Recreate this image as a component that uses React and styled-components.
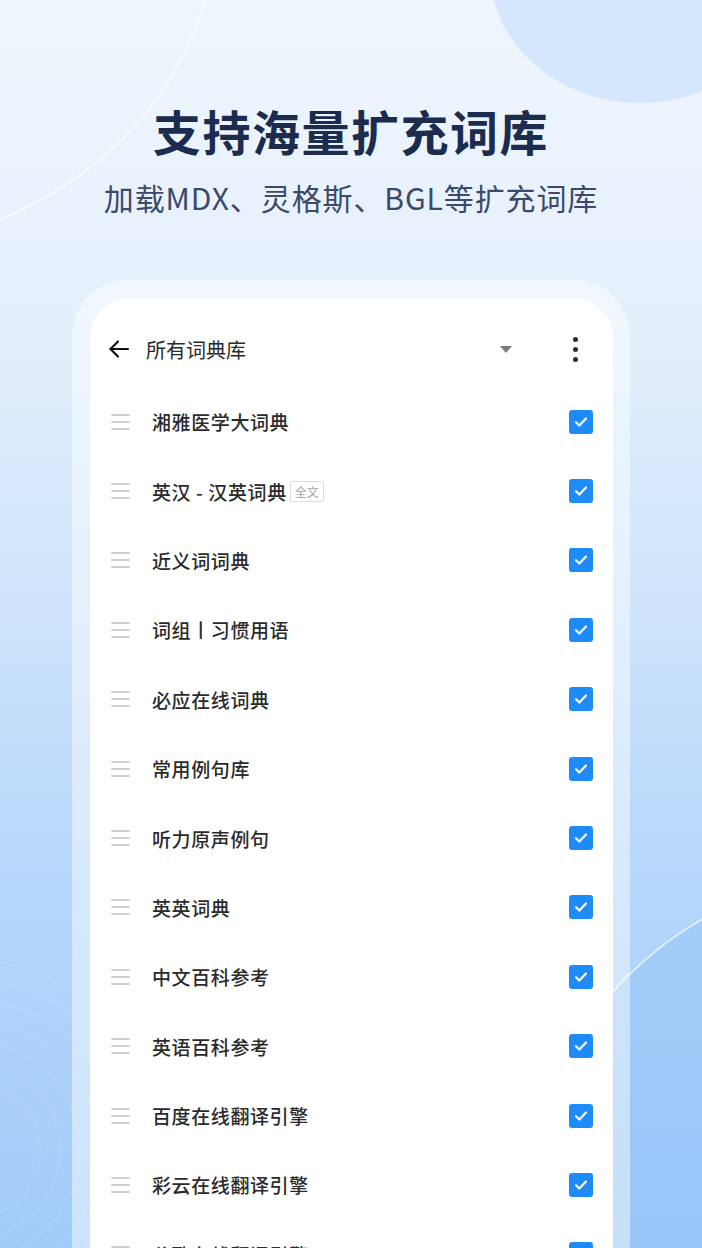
import React from "react";
import styled, { createGlobalStyle } from "styled-components";

const GlobalStyle = createGlobalStyle`
  html, body {
    margin: 0;
    padding: 0;
  }
  body {
    font-family: "Noto Sans CJK SC", "Noto Sans", sans-serif;
  }
`;

const dictionaries = [
  { name: "湘雅医学大词典" },
  { name: "英汉 - 汉英词典", tag: "全文" },
  { name: "近义词词典" },
  { name: "词组丨习惯用语" },
  { name: "必应在线词典" },
  { name: "常用例句库" },
  { name: "听力原声例句" },
  { name: "英英词典" },
  { name: "中文百科参考" },
  { name: "英语百科参考" },
  { name: "百度在线翻译引擎" },
  { name: "彩云在线翻译引擎" },
  { name: "谷歌在线翻译引擎" },
];

export default function App() {
  return (
    <Page>
      <GlobalStyle />
      <Backdrop viewBox="0 0 702 1248" preserveAspectRatio="none">
        <ellipse cx="640" cy="-30" rx="150" ry="133" fill="#d4e7fc" />
        <path d="M205 0 Q160 150 0 220" fill="none" stroke="#ffffff" strokeOpacity="0.85" strokeWidth="1.5" />
        <circle cx="880" cy="1230" r="358" fill="#7fb8f6" fillOpacity="0.28" stroke="#ffffff" strokeOpacity="0.75" strokeWidth="1.5" />
        {[70, 90, 110, 130, 150, 170, 190].map((r) => (
          <circle key={r} cx="-30" cy="1150" r={r} fill="none" stroke="#ffffff" strokeOpacity="0.12" strokeWidth="1.2" />
        ))}
      </Backdrop>

      <Content>
        <Hero>
          <Title>支持海量扩充词库</Title>
          <Subtitle>加载MDX、灵格斯、BGL等扩充词库</Subtitle>
        </Hero>

        <Frame>
          <Card>
            <Toolbar>
              <IconButton aria-label="返回">
                <svg width="24" height="24" viewBox="0 0 24 24" fill="none" stroke="#111" strokeWidth="2.2" strokeLinecap="round" strokeLinejoin="round">
                  <path d="M21 12H3.5" />
                  <path d="M11 4.5L3.5 12l7.5 7.5" />
                </svg>
              </IconButton>
              <ToolbarTitle>所有词典库</ToolbarTitle>
              <Caret />
              <Kebab aria-label="更多">
                <Dot />
                <Dot />
                <Dot />
              </Kebab>
            </Toolbar>

            <List>
              {dictionaries.map((d) => (
                <Row key={d.name}>
                  <Handle>
                    <span />
                    <span />
                    <span />
                  </Handle>
                  <Name>{d.name}</Name>
                  {d.tag && <Tag>{d.tag}</Tag>}
                  <Check>
                    <svg width="16" height="16" viewBox="0 0 16 16" fill="none" stroke="#fff" strokeWidth="2.2" strokeLinecap="round" strokeLinejoin="round">
                      <path d="M3 8.3l3.3 3.2L13 4.6" />
                    </svg>
                  </Check>
                </Row>
              ))}
            </List>
          </Card>
        </Frame>
      </Content>
    </Page>
  );
}

const Page = styled.div`
  position: relative;
  width: 702px;
  height: 1248px;
  overflow: hidden;
  background: linear-gradient(180deg, #eff5fc 0%, #e7f1fc 22%, #cfe4fb 48%, #b4d6fb 72%, #a3cbfa 100%);
`;

const Backdrop = styled.svg`
  position: absolute;
  inset: 0;
  width: 100%;
  height: 100%;
  z-index: 0;
`;

const Content = styled.div`
  position: relative;
  z-index: 1;
  display: flex;
  flex-direction: column;
`;

const Hero = styled.header`
  display: flex;
  flex-direction: column;
  align-items: center;
  padding-top: 101px;
`;

const Title = styled.h1`
  margin: 0;
  font-size: 48px;
  line-height: 58px;
  font-weight: 700;
  letter-spacing: 1.5px;
  color: #1b2c4e;
`;

const Subtitle = styled.p`
  margin: 18px 0 0;
  font-size: 30px;
  line-height: 40px;
  font-weight: 400;
  letter-spacing: 0.9px;
  color: #3b4a69;
`;

const Frame = styled.section`
  margin: 63px 0 0 72px;
  width: 558px;
  padding: 18px 17px 0 18px;
  box-sizing: border-box;
  border-radius: 56px 56px 0 0;
  background: rgba(255, 255, 255, 0.45);
  height: 980px;
`;

const Card = styled.div`
  background: #ffffff;
  border-radius: 40px 40px 0 0;
  height: 100%;
  overflow: hidden;
`;

const Toolbar = styled.div`
  display: flex;
  align-items: center;
  height: 70px;
  margin-top: 16px;
  padding: 0 35px 0 17px;
`;

const IconButton = styled.div`
  display: flex;
  align-items: center;
  justify-content: center;
  width: 24px;
  height: 24px;
`;

const ToolbarTitle = styled.div`
  margin-left: 15px;
  font-size: 20px;
  font-weight: 400;
  color: #2a2a2a;
  flex: 1;
`;

const Caret = styled.div`
  width: 0;
  height: 0;
  border-left: 6.5px solid transparent;
  border-right: 6.5px solid transparent;
  border-top: 7px solid #7a7a7a;
  margin-right: 60px;
`;

const Kebab = styled.div`
  display: flex;
  flex-direction: column;
  align-items: center;
  gap: 5px;
  width: 6px;
`;

const Dot = styled.span`
  width: 5px;
  height: 5px;
  border-radius: 50%;
  background: #2d2d2d;
`;

const List = styled.ul`
  list-style: none;
  margin: 3px 0 0;
  padding: 0;
`;

const Row = styled.li`
  display: flex;
  align-items: center;
  height: 69.4px;
  padding: 0 20px 0 21px;
`;

const Handle = styled.div`
  display: flex;
  flex-direction: column;
  gap: 5px;
  width: 19px;

  span {
    display: block;
    height: 2px;
    background: #d0d0d0;
    border-radius: 1px;
  }
`;

const Name = styled.span`
  margin-left: 22px;
  font-size: 19px;
  font-weight: 500;
  letter-spacing: 0.6px;
  color: #2b2b2b;
  white-space: pre;
`;

const Tag = styled.span`
  margin-left: 3px;
  padding: 0 4px;
  height: 19px;
  line-height: 19px;
  font-size: 12px;
  color: #a6a6a6;
  border: 1px solid #dcdcdc;
  border-radius: 2px;
`;

const Check = styled.span`
  margin-left: auto;
  display: flex;
  align-items: center;
  justify-content: center;
  width: 24px;
  height: 24px;
  border-radius: 3px;
  background: #1e8cf7;
`;
